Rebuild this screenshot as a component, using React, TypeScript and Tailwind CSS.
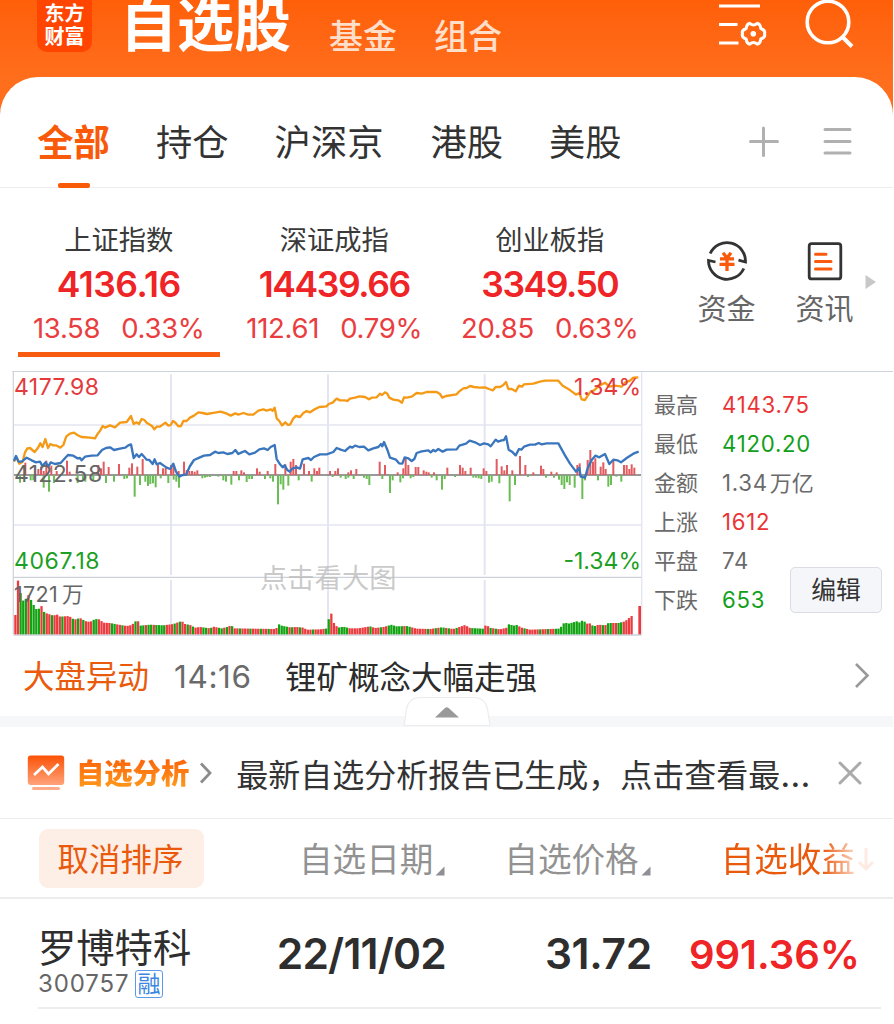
import React from "react";

/* Chart geometry is kept in a 3x grid: one CSS pixel is three chart units. */
const AVERAGE =
  "42,290 48,275 58,296 68,290 75,262 82,250 90,249 104,261 113,250 121,235 128,246 136,222 144,249 151,237 160,241 168,241 181,248 190,240 199,214 210,206 222,203 232,210 244,216 270,218 285,220 292,208 301,196 308,183 315,188 330,181 345,187 360,173 380,171 393,153 401,177 410,172 417,177 425,162 433,165 440,173 456,183 463,193 470,185 480,185 496,173 505,182 512,180 519,168 527,174 535,184 543,183 550,168 560,168 570,158 582,152 595,142 608,144 620,147 645,143 662,140 680,146 692,152 706,145 715,149 730,144 745,149 760,149 775,137 790,133 800,137 812,133 818,137 824,128 830,160 838,168 846,181 856,172 864,180 871,178 880,160 888,153 900,156 910,144 920,138 930,142 942,134 958,126 980,124 986,117 998,113 1010,101 1020,106 1035,106 1042,108 1050,101 1065,98 1078,94 1095,96 1107,103 1115,98 1130,97 1140,86 1146,90 1155,82 1162,86 1168,98 1180,104 1195,106 1206,113 1212,97 1220,98 1235,95 1250,84 1265,86 1280,81 1310,81 1320,87 1327,98 1338,93 1370,88 1378,79 1390,70 1400,69 1410,63 1422,66 1438,68 1455,67 1467,72 1479,76 1487,66 1500,66 1510,60 1518,51 1525,72 1535,72 1547,79 1557,62 1566,65 1572,58 1600,56 1620,50 1635,47 1675,47 1688,62 1705,72 1715,79 1728,89 1738,84 1745,103 1755,105 1763,92 1772,80 1782,76 1798,62 1815,53 1828,65 1845,62 1865,65 1875,53 1890,47 1900,38 1915,37";

const PRICE =
  "42,288 48,273 56,290 65,290 80,278 95,286 108,292 120,290 127,303 137,292 145,305 152,292 165,297 182,294 192,283 204,270 220,272 232,280 240,279 245,286 255,275 275,272 293,271 306,255 318,249 330,247 342,255 360,251 376,248 385,241 393,238 401,279 410,268 417,276 425,267 433,276 440,284 448,285 458,297 464,283 470,298 480,294 490,301 500,308 510,312 520,296 528,320 538,335 548,330 558,329 570,303 582,285 598,278 612,272 630,270 645,260 655,264 670,262 682,267 697,264 706,255 715,267 725,262 735,258 748,268 765,263 778,253 792,250 803,255 812,246 824,240 830,282 840,298 848,307 854,301 862,315 869,320 878,310 890,307 900,311 908,283 925,279 933,285 942,276 960,268 980,268 1000,261 1010,249 1022,254 1035,258 1050,245 1057,248 1065,242 1078,246 1092,245 1105,256 1120,250 1135,246 1143,237 1147,244 1152,231 1162,254 1170,278 1188,284 1197,295 1207,296 1214,277 1225,280 1235,288 1243,282 1250,264 1265,259 1285,256 1292,262 1300,255 1306,259 1315,252 1328,260 1340,254 1370,253 1378,242 1398,236 1409,227 1425,232 1440,240 1452,235 1465,238 1472,244 1487,224 1494,230 1505,226 1512,225 1518,214 1526,254 1536,260 1547,271 1557,252 1564,254 1572,245 1590,239 1605,239 1616,234 1625,238 1640,235 1675,235 1695,271 1710,296 1728,320 1738,308 1742,335 1755,338 1763,310 1775,285 1786,272 1798,277 1815,267 1828,297 1840,284 1852,286 1863,292 1880,279 1900,266 1916,260";

const UP: number[][] = [
  [76, 293], [115, 312], [123, 305], [131, 318], [139, 287], [154, 302], [170, 318], [201, 287], [209, 320], [295, 300], [303, 310], [311, 290], [326, 306], [357, 297], [388, 308], [396, 295], [412, 305], [428, 282], [474, 298], [489, 310], [497, 308], [513, 300], [520, 300], [536, 318], [552, 290], [560, 315], [568, 318], [576, 318], [584, 320], [592, 316], [701, 318], [709, 318], [724, 316], [732, 322], [771, 310], [779, 320], [803, 318], [826, 297], [856, 298], [872, 290], [880, 282], [888, 300], [912, 296], [927, 318], [943, 310], [951, 318], [958, 308],
  [990, 318], [1006, 318], [1014, 310], [1045, 322], [1053, 316], [1069, 312], [1139, 290], [1155, 300], [1193, 322], [1210, 310], [1217, 278], [1225, 300], [1247, 306], [1255, 306], [1271, 316], [1279, 320], [1286, 322], [1302, 322], [1342, 308], [1380, 300], [1388, 308], [1396, 318], [1412, 308], [1451, 310], [1459, 318], [1490, 282], [1505, 304], [1513, 316], [1521, 300], [1537, 316], [1560, 273], [1576, 300], [1600, 322], [1623, 302], [1630, 312], [1654, 320], [1670, 322], [1732, 300], [1739, 295], [1763, 285], [1771, 255], [1779, 290], [1786, 280], [1802, 305], [1810, 292], [1817, 312], [1840, 285], [1872, 300], [1880, 300], [1888, 312], [1895, 298], [1903, 308],
];

const DOWN: number[][] = [
  [60, 353], [92, 346], [100, 346], [131, 368], [147, 380], [162, 354], [233, 354], [249, 344], [256, 350], [280, 346], [318, 354], [342, 350], [373, 342], [381, 340], [404, 395], [420, 360], [436, 350], [444, 363], [451, 357], [459, 355], [467, 367], [482, 340], [505, 354], [521, 344], [529, 350], [537, 368], [607, 340], [615, 338], [622, 336], [630, 336], [655, 335], [670, 346], [678, 350], [694, 359], [717, 346], [740, 351], [748, 342], [756, 342], [795, 342], [811, 340], [819, 350], [834, 418], [842, 358], [850, 374], [865, 362], [896, 346], [935, 350],
  [998, 336], [1022, 338], [1037, 342], [1045, 338], [1061, 342], [1092, 338], [1100, 342], [1108, 360], [1147, 342], [1170, 384], [1178, 346], [1201, 352], [1209, 340], [1232, 340], [1240, 336], [1295, 338], [1310, 346], [1326, 374], [1334, 342], [1365, 336], [1420, 338], [1428, 338], [1436, 340], [1444, 342], [1467, 353], [1475, 350], [1498, 355], [1529, 409], [1545, 360], [1584, 336], [1638, 338], [1662, 338], [1677, 344], [1685, 360], [1693, 372], [1701, 352], [1709, 360], [1724, 368], [1747, 402], [1755, 346], [1794, 346], [1825, 365], [1833, 360], [1849, 335], [1864, 350],
];

const VOLUME_KNOTS: number[][] = [
  [46, 750], [53, 643], [60, 675], [66, 708], [76, 704], [84, 688], [92, 703], [100, 718], [106, 732], [116, 732], [123, 720], [131, 740], [140, 745], [160, 752], [170, 748], [180, 755], [207, 753], [222, 764], [240, 759], [255, 768], [270, 771], [285, 762], [298, 763], [310, 773], [330, 774], [350, 778], [380, 783], [395, 780], [404, 771], [412, 764], [420, 782], [450, 779], [490, 781], [520, 777], [545, 768], [555, 777], [570, 780], [585, 788], [600, 786], [630, 790], [640, 785], [665, 790], [685, 785], [693, 780], [702, 790], [760, 791], [828, 792], [835, 777], [845, 782], [870, 787], [890, 786], [910, 788], [920, 794], [960, 793], [983, 790],
  [990, 725], [998, 769], [1006, 780], [1014, 788], [1030, 785], [1050, 790], [1075, 790], [1110, 784], [1125, 789], [1150, 786], [1165, 782], [1172, 779], [1190, 784], [1220, 783], [1250, 791], [1290, 792], [1325, 787], [1360, 792], [1375, 787], [1395, 780], [1410, 789], [1450, 791], [1459, 777], [1467, 788], [1500, 793], [1520, 788], [1529, 774], [1537, 783], [1550, 780], [1565, 788], [1590, 794], [1620, 793], [1675, 791], [1685, 784], [1693, 772], [1705, 776], [1730, 769], [1740, 773], [1748, 765], [1760, 776], [1772, 775], [1780, 785], [1795, 779], [1815, 781], [1825, 774], [1855, 774], [1875, 769], [1882, 763], [1896, 752],
];

const VOLUME_GREEN: number[][] = [
  [57, 80], [88, 118], [127, 136], [152, 160], [180, 192], [213, 223], [228, 238], [245, 252], [275, 283], [288, 294], [305, 312], [333, 345], [365, 372], [399, 408], [418, 430], [440, 460], [466, 500], [518, 524], [535, 542], [557, 563], [575, 582], [607, 622], [632, 640], [655, 665], [675, 685], [690, 697], [715, 722], [750, 758], [780, 788], [805, 812], [832, 866], [873, 880], [895, 905], [932, 940], [955, 962], [975, 986],
  [1015, 1042], [1065, 1072], [1080, 1087], [1105, 1112], [1135, 1144], [1163, 1208], [1220, 1235], [1280, 1290], [1305, 1312], [1322, 1335], [1345, 1352], [1365, 1372], [1415, 1450], [1470, 1478], [1485, 1492], [1525, 1556], [1570, 1580], [1620, 1628], [1642, 1650], [1660, 1668], [1675, 1757], [1775, 1788], [1805, 1812], [1822, 1838], [1855, 1865],
];

function volumeTop(x: number) {
  for (let i = 1; i < VOLUME_KNOTS.length; i++) {
    const [x1, y1] = VOLUME_KNOTS[i];
    if (x <= x1) {
      const [x0, y0] = VOLUME_KNOTS[i - 1];
      return y0 + ((y1 - y0) * (x - x0)) / (x1 - x0);
    }
  }
  return 752;
}

const VOLUME = Array.from({ length: 237 }, (_, i) => {
  const x = 46 + i * 7.833;
  return { x, y: volumeTop(x), green: VOLUME_GREEN.some(([a, b]) => x >= a && x <= b) };
});

function Chart() {
  return (
    <svg className="-mt-px block h-[266px] w-[633px]" viewBox="36 18 1899 798">
      <g stroke="#e3e5f0" strokeWidth="6">
        <path d="M40 180H1925M40 480H1925" strokeWidth="5" />
        <path d="M513 28V630M513 645V808M984 28V630M984 645V808M1454 28V630M1454 645V808" />
        <path d="M1925 20V808" strokeWidth="4" />
      </g>
      <path d="M40 18V808" stroke="#d2d5df" strokeWidth="4" />
      <path d="M40 637H1925M40 810H1925" stroke="#cdd2da" strokeWidth="4" />
      <path d="M42 330H1923" stroke="#777" strokeWidth="4" />
      {UP.map(([x, y]) => (
        <rect key={x} x={x - 3} y={y} width="6" height={330 - y} fill="#e25b60" />
      ))}
      {DOWN.map(([x, y]) => (
        <rect key={x} x={x - 3} y={331} width="6" height={y - 331} fill="#69bd54" />
      ))}
      <polyline points={AVERAGE} fill="none" stroke="#f59a16" strokeWidth="7" strokeLinejoin="round" />
      <polyline points={PRICE} fill="none" stroke="#3a76bd" strokeWidth="7" strokeLinejoin="round" />
      {VOLUME.map((b) => (
        <rect key={b.x} x={b.x - 3.2} y={b.y} width="6.8" height={808 - b.y} fill={b.green ? "#12a312" : "#ec3b3f"} />
      ))}
      <rect x="1915" y="723" width="8" height="85" fill="#ec3b3f" />
    </svg>
  );
}

const indices = [
  { name: "上证指数", value: "4136.16", diff: "13.58", pct: "0.33%", active: true, fit: "tracking-[-0.500px]" },
  { name: "深证成指", value: "14439.66", diff: "112.61", pct: "0.79%", active: false, fit: "tracking-[-1.400px]" },
  { name: "创业板指", value: "3349.50", diff: "20.85", pct: "0.63%", active: false, fit: "tracking-[-1.500px]" },
];

const stats = [
  { label: "最高", value: "4143.75", unit: "", color: "text-[#ea3436]" },
  { label: "最低", value: "4120.20", unit: "", color: "text-[#12a01a]" },
  { label: "金额", value: "1.34", unit: "万亿", color: "text-[#6a6a6a]" },
  { label: "上涨", value: "1612", unit: "", color: "text-[#ea3436]" },
  { label: "平盘", value: "74", unit: "", color: "text-[#6a6a6a]" },
  { label: "下跌", value: "653", unit: "", color: "text-[#12a01a]" },
];

function Header() {
  return (
    <header className="flex h-[77px] items-start text-white">
      <div className="ml-[37px] flex h-[52px] w-[55px] flex-col items-center rounded-b-[10px] bg-[#ff4500] pt-[3px] text-[20px] leading-[23px] font-bold">
        <span>东方</span>
        <span>财富</span>
      </div>
      <h1 className="mt-[-3px] ml-[28px] text-[57px] leading-[57px] font-bold">自选股</h1>
      <span className="mt-[20px] ml-[38px] text-[34px] leading-[34px] font-medium text-[#ffdfca]">基金</span>
      <span className="mt-[20px] ml-[37px] text-[34px] leading-[34px] font-medium text-[#ffdfca]">组合</span>
      <svg className="ml-[216px] h-[50px] w-[50px]" viewBox="0 0 50 50" fill="none" stroke="white" strokeWidth="3.200">
        <path d="M1 6H42M1 24.500H19.500M1 43H20.500" />
        <path
          d="M34.300 23.300 Q38 26.600 41.700 23.300 Q44.800 23.900 45.300 28.500 Q50.200 30.300 49 33.700 Q50.200 37.200 45.300 39 Q44.800 43.600 41.700 44.200 Q38 40.900 34.300 44.200 Q31.200 43.600 30.700 39 Q25.800 37.200 27 33.700 Q25.800 30.300 30.700 28.500 Q31.200 23.900 34.300 23.300Z"
          transform="translate(-2.500 0)"
          strokeWidth="3"
          strokeLinejoin="round"
        />
        <circle cx="35.300" cy="33.800" r="2.800" fill="white" stroke="none" />
      </svg>
      <svg className="ml-[36px] h-[50px] w-[50px]" viewBox="0 0 50 50" fill="none" stroke="white" strokeWidth="3.600">
        <circle cx="24" cy="22" r="20.800" />
        <path d="M38.500 37L48 46.500" strokeWidth="4" />
      </svg>
    </header>
  );
}

function Tabs() {
  return (
    <nav className="flex h-[111px] items-start border-b-[1.500px] border-[#ededed] pt-[48px] pl-[37px] text-[36.300px] leading-[37px] text-[#333]">
      <div className="flex h-[63px] w-[73px] flex-col items-center justify-between">
        <span className="font-bold text-[#f95a0a]">全部</span>
        <span className="h-[5px] w-[32px] rounded-[2px] bg-[#f95a0a]" />
      </div>
      <span className="ml-[46px]">持仓</span>
      <span className="ml-[46px]">沪深京</span>
      <span className="ml-[47px]">港股</span>
      <span className="ml-[46px]">美股</span>
      <svg className="mt-[1px] ml-[126px] h-[32px] w-[32px]" viewBox="0 0 32 32" stroke="#b0b0b0" strokeWidth="3" strokeLinecap="round">
        <path d="M2.500 15.500H29.500M15.500 2V29.500" />
      </svg>
      <svg className="mt-[1px] ml-[42px] h-[32px] w-[32px]" viewBox="0 0 32 32" stroke="#b0b0b0" strokeWidth="3" strokeLinecap="round">
        <path d="M3 3.500H28M3 15.500H28M3 27H28" />
      </svg>
    </nav>
  );
}

function Indices() {
  return (
    <section className="flex h-[183px]">
      <div className="ml-[11px] flex">
        {indices.map((x) => (
          <div key={x.name} className="flex w-[215.500px] flex-col items-center pt-[39px]">
            <span className="text-[27.300px] leading-[28px] text-[#3a3a3a]">{x.name}</span>
            <span className={`mt-[12px] text-[35.500px] leading-[36px] font-semibold text-[#ee2426] ${x.fit}`}>{x.value}</span>
            <span className="mt-[11px] flex gap-[21px] text-[27.500px] leading-[28px] tracking-[-0.300px] text-[#ea3d40]">
              <span>{x.diff}</span>
              <span>{x.pct}</span>
            </span>
            {x.active && <span className="mt-[10px] h-[5px] w-[202px] bg-[#f75c10]" />}
          </div>
        ))}
      </div>
      <div className="ml-[40px] flex w-[58px] flex-col items-center pt-[51px]">
        <svg className="h-[44px] w-[44px]" viewBox="0 0 44 44" fill="none" stroke="#333" strokeWidth="2.800">
          <path d="M5.200 14.500A18.500 18.500 0 0 1 40.500 23L33.500 21.200" />
          <path d="M38.800 29.500A18.500 18.500 0 0 1 3.500 21.500L10.500 23" />
          <path d="M18 13.800L22 19L26 13.800M15 19.800H29M14.500 25.300H29.500M22 19V32" stroke="#fa5a0c" strokeWidth="3.300" />
        </svg>
        <span className="mt-[12px] text-[29px] leading-[30px] text-[#666]">资金</span>
      </div>
      <div className="ml-[40px] flex w-[58px] flex-col items-center pt-[51px]">
        <svg className="h-[44px] w-[44px]" viewBox="0 0 44 44" fill="none" stroke="#333" strokeWidth="2.800">
          <rect x="6.200" y="4.700" width="31.600" height="35.200" rx="2.500" />
          <path d="M12.500 15.300H23M12.500 22.500H28M12.500 30H28" stroke="#fa5a0c" strokeWidth="3" strokeLinecap="round" />
        </svg>
        <span className="mt-[12px] text-[29px] leading-[30px] text-[#666]">资讯</span>
      </div>
      <svg className="mt-[86px] ml-[11px] h-[16px] w-[12px]" viewBox="0 0 12 16" fill="#c8c8c8">
        <path d="M.5 1L11 8L.5 15Z" />
      </svg>
    </section>
  );
}

function Market() {
  return (
    <section className="ml-[12px] flex h-[265px] border-t-[1.500px] border-[#cfd3dd]">
      <div className="relative h-[264px] w-[633px] text-[23px] leading-[24px]">
        <Chart />
        <span className="absolute top-[3px] left-[2px] tracking-[0.450px] text-[#e33a3d]">4177.98</span>
        <span className="absolute top-[90px] left-[2px] tracking-[0.300px] text-[#666]">4122.58</span>
        <span className="absolute top-[177px] left-[2px] tracking-[0.600px] text-[#1c9f24]">4067.18</span>
        <span className="absolute top-[3px] right-[4px] text-[#e33a3d]">1.34%</span>
        <span className="absolute top-[177px] right-[4px] text-[#1c9f24]">-1.34%</span>
        <span className="absolute top-[210px] left-[2px] text-[21.500px] tracking-[0.300px] text-[#666]">
          1721<span className="ml-[4px]">万</span>
        </span>
        <span className="absolute top-[193px] left-[248px] text-[27.300px] leading-[28px] text-[#bcbcbc]/80">点击看大图</span>
      </div>
      <div className="relative ml-[9px] pt-[13px] text-[22.200px]">
        {stats.map((s) => (
          <div key={s.label} className="flex h-[39px] items-center leading-[24px]">
            <span className="w-[68px] text-[22px] text-[#6a6a6a]">{s.label}</span>
            <span className={`tracking-[0.750px] ${s.color}`}>{s.value}</span>
            <span className="ml-[2px] text-[22px] text-[#6a6a6a]">{s.unit}</span>
          </div>
        ))}
        <button className="absolute top-[195px] left-[136px] h-[46px] w-[92px] rounded-[5px] border-[1.500px] border-[#dcdde3] bg-[#f5f6f9] text-[24.800px] leading-[42px] whitespace-nowrap text-[#333]">
          编辑
        </button>
      </div>
    </section>
  );
}

function News() {
  return (
    <section className="relative flex h-[91px] items-start border-b-[11px] border-[#f6f7f9] pt-[25px] pl-[23px] text-[31.500px] leading-[32px]">
      <span className="text-[#ea5a0c]">大盘异动</span>
      <span className="ml-[25px] w-[86px] tracking-[0.600px] text-[#6a6a6a]">14:16</span>
      <span className="mt-[1px] ml-[25px] text-[#2c2c2c]">锂矿概念大幅走强</span>
      <svg className="ml-auto mt-[1px] mr-[23px] h-[28px] w-[16px]" viewBox="0 0 16 28" fill="none" stroke="#999" strokeWidth="2.600">
        <path d="M2 2L13.500 13.500L2 25" />
      </svg>
      <svg className="absolute top-[60px] left-[403px] h-[30px] w-[88px]" viewBox="0 0 88 30">
        <path d="M1 29.500L3.500 13Q6 1.500 17 1.500H71Q82 1.500 84.500 13L87 29.500Z" fill="white" stroke="#ececee" strokeWidth="1.200" />
        <path d="M32 21.500L42 12Q43.800 10.400 45.600 12L56 21.500Z" fill="#999" />
      </svg>
    </section>
  );
}

function Analysis() {
  return (
    <section className="flex h-[92px] items-center border-b-[1.500px] border-[#ededed] pl-[27px]">
      <svg className="h-[38px] w-[38px]" viewBox="0 0 38 38" fill="none">
        <defs>
          <linearGradient id="tile" x1="0" y1="0" x2="0" y2="1">
            <stop offset="0" stopColor="#fb5205" />
            <stop offset="1" stopColor="#ffa37c" />
          </linearGradient>
        </defs>
        <rect x=".8" y="1.500" width="36.400" height="29.500" rx="3" fill="url(#tile)" />
        <path d="M7 21L15.500 13L21.500 20L31.500 10" stroke="white" strokeWidth="2.800" />
        <rect x="5" y="33" width="28" height="3" rx="1.500" fill="#ffab88" />
      </svg>
      <span className="mt-[3px] ml-[11px] bg-gradient-to-b from-[#fa5f0a] to-[#ff9d1c] bg-clip-text text-[28.300px] leading-[34px] font-black text-transparent">自选分析</span>
      <svg className="ml-[10px] h-[24px] w-[14px]" viewBox="0 0 14 24" fill="none" stroke="#8c8c8c" strokeWidth="2.800">
        <path d="M2 2.500L11 12L2 21.500" />
      </svg>
      <span className="mt-[4px] ml-[23px] text-[32px] leading-[32px] whitespace-nowrap text-[#333]">
        最新自选分析报告已生成，点击查看最<span className="text-[35px]">…</span>
      </span>
      <svg className="ml-auto mr-[31px] h-[24px] w-[24px] shrink-0" viewBox="0 0 24 24" stroke="#aaa" strokeWidth="3" strokeLinecap="round">
        <path d="M2 2L22 22M22 2L2 22" />
      </svg>
    </section>
  );
}

function SortMark() {
  return (
    <svg className="mt-[21px] ml-[2px] h-[10px] w-[10px]" viewBox="0 0 10 10" fill="#8f8f96">
      <path d="M9.500 .5V9.500H.5Z" />
    </svg>
  );
}

function SortBar() {
  return (
    <section className="flex h-[80px] items-center border-b-2 border-[#ededed] pl-[39px] text-[33.600px] leading-[34px] text-[#929292]">
      <button className="h-[59px] w-[165px] rounded-[9px] bg-[#fdeee6] pt-[3px] pr-[2px] text-[31.500px] leading-[56px] text-[#ea5a0c]">取消排序</button>
      <div className="mt-[4px] ml-[95px] flex items-center">
        <span>自选日期</span>
        <SortMark />
      </div>
      <div className="mt-[4px] ml-[59px] flex items-center">
        <span>自选价格</span>
        <SortMark />
      </div>
      <div className="mt-[4px] ml-[70px] flex items-center text-[#ea5a0c] [mask-image:linear-gradient(to_right,#000_66%,rgba(0,0,0,0.15)_90%)]">
        <span>自选收益</span>
        <svg className="mt-[-2px] ml-[2px] h-[26px] w-[18px]" viewBox="0 0 18 26" fill="none" stroke="#f4753a" strokeWidth="3">
          <path d="M9 2V23M2 16L9 23L16 16" />
        </svg>
      </div>
    </section>
  );
}

function StockRow() {
  return (
    <section className="ml-[38px] flex h-[110px] w-[843px] items-start border-b-2 border-[#ededed]">
      <div className="w-[160px] pt-[29px]">
        <div className="text-[38.300px] leading-[40px] text-[#2e2e2e]">罗博特科</div>
        <div className="mt-[1px] flex items-center">
          <span className="w-[91px] text-[24px] leading-[30px] tracking-[0.900px] text-[#666]">300757</span>
          <span className="ml-[6px] h-[28px] w-[28px] rounded-[3px] border-[1.500px] border-[#5b9ae6] text-center text-[23px] leading-[26px] text-[#3a86e0]">融</span>
        </div>
      </div>
      <span className="w-[248px] pt-[33px] text-right text-[42.500px] leading-[44px] font-semibold tracking-[-0.800px] whitespace-nowrap text-[#2e2e2e]">22/11/02</span>
      <span className="w-[206px] pt-[33px] text-right text-[42.500px] leading-[44px] font-semibold tracking-[-0.300px] text-[#2e2e2e]">31.72</span>
      <span className="w-[208px] pt-[34px] text-right text-[40px] leading-[44px] font-semibold text-[#ee2426]">991.36%</span>
    </section>
  );
}

export default function App() {
  return (
    <div lang="zh-CN" className="h-[1024px] w-full overflow-hidden bg-white font-['Inter','Noto_Sans_CJK_SC',sans-serif]">
      <div className="w-[893px] bg-gradient-to-b from-[#ff5f08] to-[#ff6e1c] to-[80px]">
        <Header />
        <main className="h-[947px] rounded-t-[38px] bg-white">
          <Tabs />
          <Indices />
          <Market />
          <News />
          <Analysis />
          <SortBar />
          <StockRow />
        </main>
      </div>
    </div>
  );
}
